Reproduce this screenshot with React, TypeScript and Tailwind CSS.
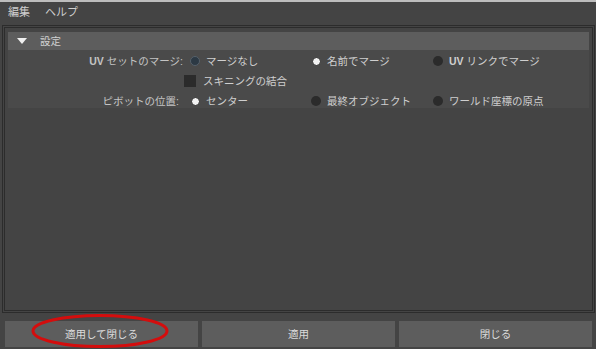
import React from "react";

const font = { fontFamily: '"Liberation Sans", "Noto Sans CJK JP", sans-serif' };

function Radio({ kind }: { kind: "on" | "off" | "dim" }) {
  if (kind === "on")
    return <span className="block w-[9px] h-[9px] rounded-full bg-[#f2f2f2] border border-[#2a2a2a]" />;
  if (kind === "dim")
    return <span className="block w-[10px] h-[10px] rounded-full bg-[#2c3944] border border-[#55606a]" />;
  return <span className="block w-[10px] h-[10px] rounded-full bg-[#2b2b2b]" />;
}

function Opt({ kind, children }: { kind: "on" | "off" | "dim"; children: React.ReactNode }) {
  return (
    <div className="flex items-center">
      <div className="w-[22px] flex justify-center">
        <Radio kind={kind} />
      </div>
      <span className="text-[#cfcfcf]">{children}</span>
    </div>
  );
}

export default function App() {
  return (
    <div className="relative w-[596px] h-[349px] bg-[#444444] overflow-hidden text-[10.5px] leading-none" style={font}>
      <div className="h-[2px] bg-[#bdbdbd]" />
      <div className="h-[21px] flex items-center gap-[15px] pl-[8px] text-[#cfcfcf] text-[11px]">
        <span>編集</span>
        <span>ヘルプ</span>
      </div>
      <div className="ml-[2px] mt-[2px] w-[593px] h-[288px] border border-[#2c2c2c] p-[1px]">
        <div className="h-full border border-[#2c2c2c] pt-[4px] pl-[3px] pr-[3px]">
          <div className="h-[18px] bg-[#5d5d5d] flex items-center">
            <svg width="10" height="6" viewBox="0 0 10 6" className="ml-[9px]">
              <polygon points="0,0 10,0 5,6" fill="#f0f0f0" />
            </svg>
            <span className="ml-[13px] text-[#d0d0d0]">設定</span>
          </div>
          <div className="h-[58px] bg-[#4a4a4a] pt-[1px]">
            <div className="flex items-center h-[20px]">
              <div className="w-[175px] text-right text-[#c4c4c4]">
                <b className="font-bold">UV</b> セットのマージ:
              </div>
              <div className="w-[122px] pl-[1px]"><Opt kind="dim">マージなし</Opt></div>
              <div className="w-[122px]"><Opt kind="on">名前でマージ</Opt></div>
              <div><Opt kind="off"><b className="font-bold">UV</b> リンクでマージ</Opt></div>
            </div>
            <div className="flex items-center h-[20px]">
              <div className="w-[176px]" />
              <span className="block w-[12px] h-[12px] bg-[#2b2b2b] mr-[7px]" />
              <span className="text-[#cfcfcf]">スキニングの結合</span>
            </div>
            <div className="flex items-center h-[20px]">
              <div className="w-[175px] text-right text-[#c4c4c4] pr-[4px]">ピボットの位置:</div>
              <div className="w-[122px] pl-[1px]"><Opt kind="on">センター</Opt></div>
              <div className="w-[122px]"><Opt kind="off">最終オブジェクト</Opt></div>
              <div><Opt kind="off">ワールド座標の原点</Opt></div>
            </div>
          </div>
        </div>
      </div>
      <div className="flex gap-[4px] pl-[5px] pr-[4px] mt-[8px]">
        <button className="flex-1 h-[26px] bg-[#5d5d5d] text-[#dcdcdc] flex items-center justify-center">適用して閉じる</button>
        <button className="flex-1 h-[26px] bg-[#5d5d5d] text-[#dcdcdc] flex items-center justify-center">適用</button>
        <button className="flex-1 h-[26px] bg-[#5d5d5d] text-[#dcdcdc] flex items-center justify-center">閉じる</button>
      </div>
      <svg className="absolute left-[30px] top-[313px]" width="140" height="36" viewBox="0 0 140 36">
        <ellipse cx="70" cy="18" rx="67" ry="15.5" fill="none" stroke="#d40d0d" strokeWidth="3" />
      </svg>
    </div>
  );
}
